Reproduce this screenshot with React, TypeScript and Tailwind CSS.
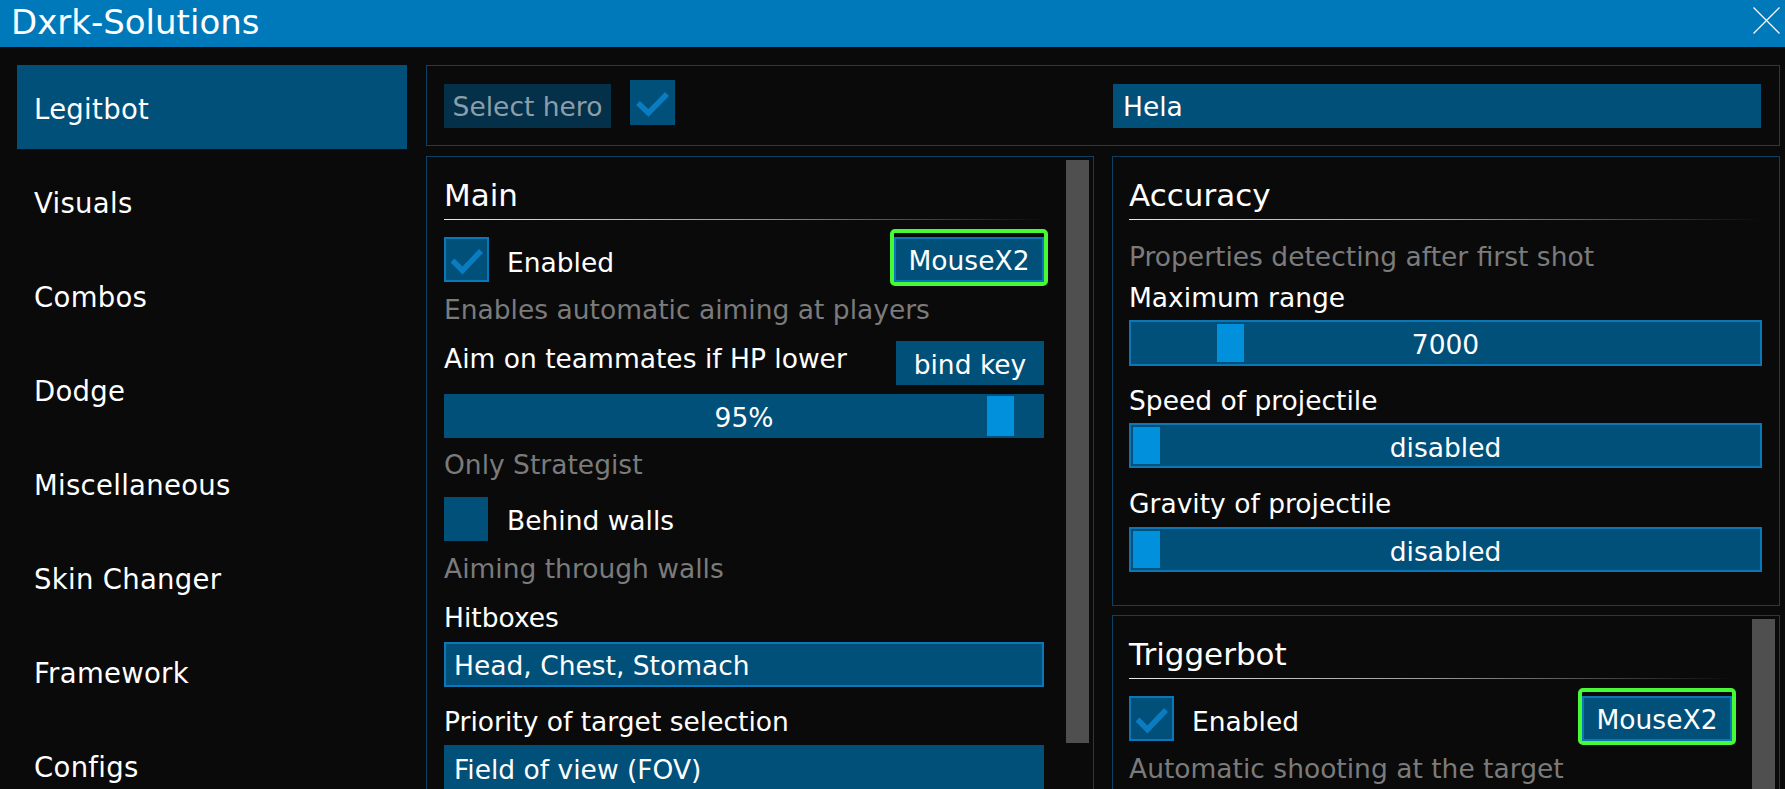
import React from "react";

const menu = ["Legitbot", "Visuals", "Combos", "Dodge", "Miscellaneous", "Skin Changer", "Framework", "Configs"];

function Check({ bordered }: { bordered?: boolean }) {
    return (
        <span
            className={
                "relative inline-block h-[45px] w-[45px] shrink-0 bg-[#00507a] " +
                (bordered ? "border-2 border-[#0a78b8]" : "")
            }
        >
            <svg className="absolute left-0 top-0" width="41" height="41" viewBox="0 0 41 41">
                <polyline
                    points={bordered ? "6.5,21.5 16.5,31.5 35,12" : "8,23 18.5,33 37,14"}
                    fill="none"
                    stroke="#0a7cc2"
                    strokeWidth="5.5"
                />
            </svg>
        </span>
    );
}

function EmptyBox() {
    return <span className="inline-block h-[44px] w-[44px] shrink-0 bg-[#00507a]" />;
}

function KeyButton({ label }: { label: string }) {
    return (
        <div className="-mr-[4px] rounded-[5px] border-4 border-[#46fb35] pt-[4px]">
            <div className="flex h-[45px] w-[150px] items-center justify-center border-2 border-[#0a78b8] bg-[#00507a] pt-[3px] text-[26.5px] leading-[32px]">
                {label}
            </div>
        </div>
    );
}

type SliderProps = {
    frac: number;
    label: string;
    bordered?: boolean;
    height: string;
};

function Slider({ frac, label, bordered, height }: SliderProps) {
    // thumb left follows the value, the rest is plain flow
    const inner = bordered ? 629 : 600;
    const left = 2 + frac * (inner - 27 - 4);
    return (
        <div
            className={
                "relative flex w-full items-center justify-center bg-[#00507a] pt-[4px] text-[26.5px] leading-[32px] " +
                height +
                (bordered ? " border-2 border-[#0a78b8]" : "")
            }
        >
            <span className="absolute bottom-[2px] top-[2px] w-[27px] bg-[#0090dc]" style={{ left }} />
            <span className="relative">{label}</span>
        </div>
    );
}

function Heading({ text }: { text: string }) {
    return (
        <div>
            <div className="text-[31px] leading-[36px]">{text}</div>
            <div className="mt-[6px] h-px bg-linear-to-r from-[#e8e8e8] via-[#9a9a9a] to-transparent" />
        </div>
    );
}

function Hint({ text, className }: { text: string; className: string }) {
    return <div className={"text-[26.5px] leading-[32px] text-[#7b7b7b] " + className}>{text}</div>;
}

function Label({ text, className }: { text: string; className: string }) {
    return <div className={"text-[26.5px] leading-[32px] " + className}>{text}</div>;
}

function Scrollbar({ className }: { className: string }) {
    return <div className={"w-[23px] shrink-0 bg-[#4f4f4f] " + className} />;
}

export default function App() {
    return (
        <div className="h-[789px] w-[1785px] overflow-hidden bg-[#0a0a0a] font-['DejaVu_Sans',sans-serif] text-white">
            <header className="flex h-[47px] items-start justify-between bg-[#0079ba] pl-[11px] pr-[5px]">
                <span className="pt-[3px] text-[34px] leading-[38px]">Dxrk-Solutions</span>
                <svg className="mt-[7px]" width="27" height="27" viewBox="0 0 27 27">
                    <path d="M0.5 0.5 L26.5 26.5 M26.5 0.5 L0.5 26.5" stroke="#ffffff" strokeWidth="1.2" />
                </svg>
            </header>

            <div className="flex pt-[18px]">
                <nav className="flex w-[426px] shrink-0 flex-col gap-[10px] pl-[17px] pr-[19px]">
                    {menu.map((item, i) => (
                        <div
                            key={item}
                            className={
                                "flex h-[84px] items-center pl-[17px] pt-[4px] text-[27.5px] leading-[32px] tracking-[0.3px] " +
                                (i === 0 ? "bg-[#00507a]" : "")
                            }
                        >
                            {item}
                        </div>
                    ))}
                </nav>

                <div className="flex w-[1354px] flex-col gap-[10px]">
                    <div className="flex h-[81px] items-center border border-[#0b4163] pl-[17px] pr-[18px]">
                        <div className="flex flex-1 items-center">
                            <div className="flex h-[44px] w-[167px] items-center justify-center bg-[#04304a] pt-[3px] text-[26.5px] leading-[32px] text-[#8b9ea9]">
                                Select hero
                            </div>
                            <span className="ml-[19px]">
                                <Check />
                            </span>
                        </div>
                        <div className="flex h-[44px] w-[648px] items-center bg-[#00507a] pl-[10px] pt-[3px] text-[26.5px] leading-[32px]">
                            Hela
                        </div>
                    </div>

                    <div className="flex gap-[18px]">
                        {/* Main */}
                        <section className="flex h-[700px] w-[668px] border border-[#0b4163] pl-[17px] pr-[4px]">
                            <div className="w-[600px] pt-[20px]">
                                <Heading text="Main" />
                                <div className="mt-[9px] flex h-[57px] items-start">
                                    <span className="mt-[8px]">
                                        <Check bordered />
                                    </span>
                                    <Label text="Enabled" className="ml-[18px] mt-[18px]" />
                                    <div className="ml-auto">
                                        <KeyButton label="MouseX2" />
                                    </div>
                                </div>
                                <Hint text="Enables automatic aiming at players" className="mt-[8px]" />
                                <div className="mt-[15px] flex items-start justify-between">
                                    <Label text="Aim on teammates if HP lower" className="mt-[2px]" />
                                    <div className="flex h-[44px] w-[148px] items-center justify-center bg-[#00507a] pt-[3px] text-[26.5px] leading-[32px]">
                                        bind key
                                    </div>
                                </div>
                                <div className="mt-[9px]">
                                    <Slider frac={0.95} label="95%" height="h-[44px]" />
                                </div>
                                <Hint text="Only Strategist" className="mt-[11px]" />
                                <div className="mt-[16px] flex items-start">
                                    <EmptyBox />
                                    <Label text="Behind walls" className="ml-[19px] mt-[8px]" />
                                </div>
                                <Hint text="Aiming through walls" className="mt-[12px]" />
                                <Label text="Hitboxes" className="mt-[17px]" />
                                <div className="mt-[8px] flex h-[45px] items-center border-2 border-[#0a78b8] bg-[#00507a] pl-[8px] pt-[3px] text-[26.5px] leading-[32px]">
                                    Head, Chest, Stomach
                                </div>
                                <Label text="Priority of target selection" className="mt-[19px]" />
                                <div className="mt-[7px] flex h-[45px] items-center bg-[#00507a] pl-[10px] pt-[4px] text-[26.5px] leading-[32px]">
                                    Field of view (FOV)
                                </div>
                            </div>
                            <Scrollbar className="ml-[22px] mt-[3px] h-[583px]" />
                        </section>

                        {/* Right column */}
                        <div className="flex w-[668px] flex-col gap-[9px]">
                            <section className="h-[450px] border border-[#0b4163] pl-[16px] pr-[17px] pt-[20px]">
                                <Heading text="Accuracy" />
                                <Hint text="Properties detecting after first shot" className="mt-[21px]" />
                                <Label text="Maximum range" className="mt-[9px]" />
                                <div className="mt-[6px]">
                                    <Slider frac={0.14} label="7000" bordered height="h-[46px]" />
                                </div>
                                <Label text="Speed of projectile" className="mt-[19px]" />
                                <div className="mt-[6px]">
                                    <Slider frac={0} label="disabled" bordered height="h-[45px]" />
                                </div>
                                <Label text="Gravity of projectile" className="mt-[20px]" />
                                <div className="mt-[7px]">
                                    <Slider frac={0} label="disabled" bordered height="h-[45px]" />
                                </div>
                            </section>

                            <section className="flex h-[300px] border border-[#0b4163] pl-[16px] pr-[3px]">
                                <div className="w-[603px] pt-[20px]">
                                    <Heading text="Triggerbot" />
                                    <div className="mt-[9px] flex h-[57px] items-start">
                                        <span className="mt-[8px]">
                                            <Check bordered />
                                        </span>
                                        <Label text="Enabled" className="ml-[18px] mt-[18px]" />
                                        <div className="ml-auto">
                                            <KeyButton label="MouseX2" />
                                        </div>
                                    </div>
                                    <Hint text="Automatic shooting at the target" className="mt-[8px]" />
                                </div>
                                <Scrollbar className="ml-[20px] mt-[3px] h-[300px]" />
                            </section>
                        </div>
                    </div>
                </div>
            </div>
        </div>
    );
}
